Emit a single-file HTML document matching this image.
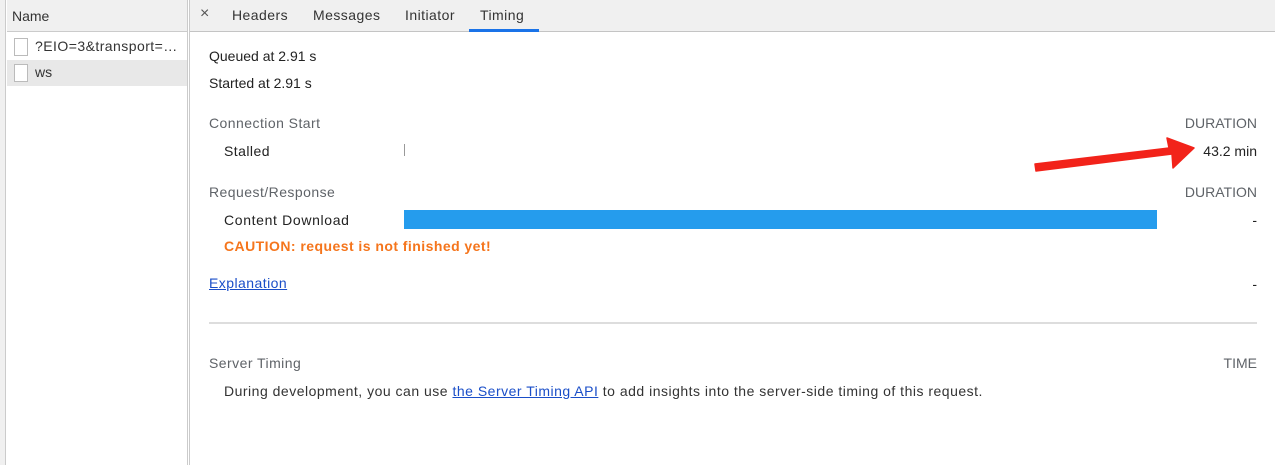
<!DOCTYPE html>
<html><head><style>
*{margin:0;padding:0;box-sizing:border-box}
body{width:1275px;height:465px;overflow:hidden;background:#fff;font-family:"Liberation Sans",Arial,sans-serif;font-size:14px;color:#222;position:relative}
.a{position:absolute;white-space:nowrap}
.g{color:#5f6368}
.s{letter-spacing:0.45px}
</style></head><body>
<div class="a" style="left:0;top:0;width:6px;height:465px;background:#f0f0f0;border-right:1px solid #cbcbcb"></div>
<div class="a" style="left:7px;top:0;width:180px;height:32px;background:#f0f0f0;border-bottom:1px solid #cbcbcb"></div>
<div class="a" style="left:12px;top:8px;color:#333">Name</div>
<div class="a" style="left:187px;top:0;width:1px;height:465px;background:#cbcbcb"></div>
<div class="a" style="left:189px;top:0;width:1px;height:465px;background:#cbcbcb"></div>
<div class="a" style="left:14px;top:38px;width:14px;height:18px;border:1px solid #bbb;background:#fff"></div>
<div class="a s" style="left:35px;top:38px;color:#333">?EIO=3&amp;transport=…</div>
<div class="a" style="left:7px;top:60px;width:180px;height:26px;background:#e8e8e8"></div>
<div class="a" style="left:14px;top:64px;width:14px;height:18px;border:1px solid #bbb;background:#fff"></div>
<div class="a" style="left:35px;top:64px;color:#333">ws</div>

<div class="a" style="left:190px;top:0;width:1085px;height:32px;background:#f0f0f0;border-bottom:1px solid #c4c4c4"></div>
<div class="a" style="left:200px;top:5px;font-size:16px;color:#555">×</div>
<div class="a s" style="left:232px;top:7px;color:#333">Headers</div>
<div class="a s" style="left:313px;top:7px;color:#333">Messages</div>
<div class="a s" style="left:405px;top:7px;color:#333">Initiator</div>
<div class="a s" style="left:480px;top:7px;color:#333">Timing</div>
<div class="a" style="left:469px;top:29px;width:70px;height:3px;background:#1a73e8"></div>

<div class="a" style="left:209px;top:48px">Queued at 2.91 s</div>
<div class="a" style="left:209px;top:75px">Started at 2.91 s</div>
<div class="a g s" style="left:209px;top:115px">Connection Start</div>
<div class="a g" style="right:18px;top:115px">DURATION</div>
<div class="a s" style="left:224px;top:143px">Stalled</div>
<div class="a" style="left:404px;top:144px;width:1px;height:12px;background:#999"></div>
<div class="a" style="right:18px;top:143px">43.2 min</div>
<div class="a g s" style="left:209px;top:184px">Request/Response</div>
<div class="a g" style="right:18px;top:184px">DURATION</div>
<div class="a" style="left:224px;top:212px;letter-spacing:0.65px">Content Download</div>
<div class="a" style="left:404px;top:210px;width:753px;height:19px;background:#259ced"></div>
<div class="a" style="right:18px;top:212px">-</div>
<div class="a s" style="left:224px;top:238px;color:#f5751c;font-weight:bold">CAUTION: request is not finished yet!</div>
<div class="a s" style="left:209px;top:275px;color:#1a4ec8;text-decoration:underline">Explanation</div>
<div class="a" style="right:18px;top:276px">-</div>
<div class="a" style="left:209px;top:322px;width:1048px;height:2px;background:#ddd"></div>
<div class="a g s" style="left:209px;top:355px">Server Timing</div>
<div class="a g" style="right:18px;top:355px">TIME</div>
<div class="a" style="left:224px;top:383px;color:#333;letter-spacing:0.5px">During development, you can use <span style="color:#1a4ec8;text-decoration:underline">the Server Timing API</span> to add insights into the server-side timing of this request.</div>

<svg class="a" style="left:0;top:0" width="1275" height="465">
<path d="M1036 171 L1172 154 L1173 168 L1194 148 L1167 138 L1169 148 L1035 164 Z" fill="#f2231a" stroke="#f2231a" stroke-width="1.5" stroke-linejoin="round"/>
</svg>
</body></html>
